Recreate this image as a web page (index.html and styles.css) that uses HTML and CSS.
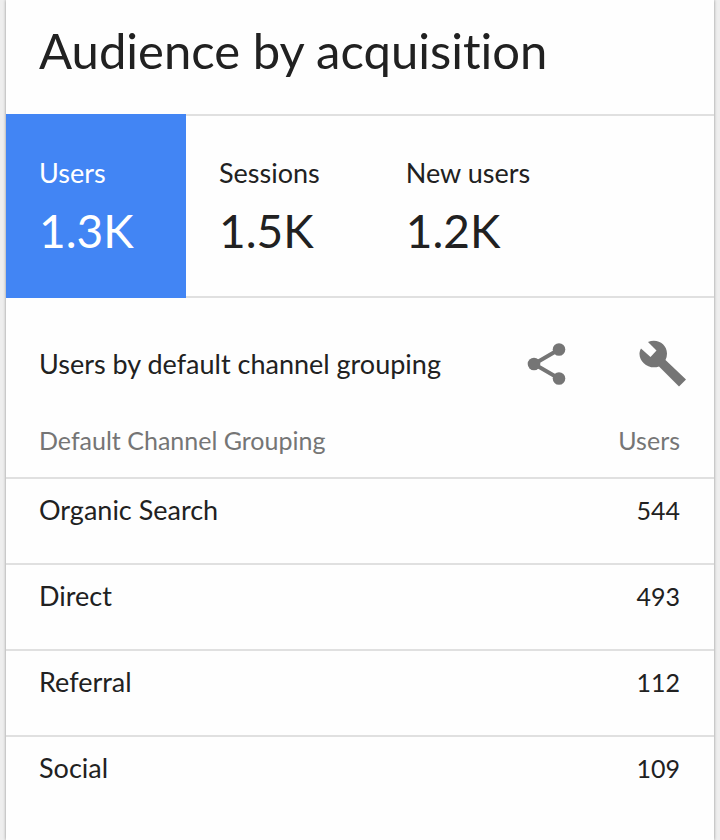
FILE: index.html
```html
<!DOCTYPE html>
<html lang="en">
<head>
    <meta charset="UTF-8">
    <meta name="viewport" content="width=device-width, initial-scale=1.0">
    <title>Audience by acquisition</title>
    <link rel="stylesheet" href="styles.css">
</head>
<body>
    <main class="card">
        <h1 class="card-title">Audience by acquisition</h1>

        <div class="metrics">
            <button class="metric active" type="button">
                <span class="metric-label">Users</span>
                <span class="metric-value">1.3K</span>
            </button>
            <button class="metric" type="button">
                <span class="metric-label">Sessions</span>
                <span class="metric-value">1.5K</span>
            </button>
            <button class="metric" type="button">
                <span class="metric-label">New users</span>
                <span class="metric-value">1.2K</span>
            </button>
        </div>

        <div class="report-header">
            <h2>Users by default channel grouping</h2>
            <div class="actions">
                <button class="icon-button" type="button" aria-label="Share">
                    <svg viewBox="0 0 48 48" width="48" height="48">
                        <path d="M36 9.5 11 24l25 14.5" fill="none" stroke="#757575" stroke-width="4"/>
                        <circle cx="36" cy="9.5" r="6.3" fill="#757575"/>
                        <circle cx="11" cy="24" r="6.3" fill="#757575"/>
                        <circle cx="36" cy="38.5" r="6.3" fill="#757575"/>
                    </svg>
                </button>
                <button class="icon-button" type="button" aria-label="Customize">
                    <svg viewBox="0 0 48 48" width="48" height="48">
                        <path fill="#757575" d="M9 2C18-2 28 4 28 13.500Q28 17 26.500 20L47 39.500 40 46.500 20 26.500C10 30 0 22 .500 13Q.800 10 2 8.500L11.500 17 17.500 10.500z"/>
                    </svg>
                </button>
            </div>
        </div>

        <table class="report">
            <thead>
                <tr>
                    <th scope="col">Default Channel Grouping</th>
                    <th scope="col">Users</th>
                </tr>
            </thead>
            <tbody>
                <tr>
                    <td>Organic Search</td>
                    <td>544</td>
                </tr>
                <tr>
                    <td>Direct</td>
                    <td>493</td>
                </tr>
                <tr>
                    <td>Referral</td>
                    <td>112</td>
                </tr>
                <tr>
                    <td>Social</td>
                    <td>109</td>
                </tr>
            </tbody>
        </table>
    </main>
</body>
</html>
```
FILE: styles.css
```css
* {
    box-sizing: border-box;
}
body {
    margin: 0;
    background: #eeeeee;
    color: #212121;
    font-family: Lato, sans-serif;
    font-size: 27px;
    line-height: 32px;
    font-variant-ligatures: none;
}
.card {
    min-height: 100vh;
    margin: 0 6px;
    background: #fefefe;
    box-shadow: 0 0 3px rgba(0, 0, 0, 0.4);
}
.card-title {
    margin: 0;
    padding: 18px 33px 32px;
    font-size: 49px;
    font-weight: 400;
    line-height: 64px;
}
.metrics {
    display: flex;
    border-top: 2px solid #e0e0e0;
    border-bottom: 2px solid #e0e0e0;
}
.metric {
    display: flex;
    flex-direction: column;
    min-width: 180px;
    margin: -2px 0;
    padding: 43px 53px 37px 33px;
    border: none;
    background: none;
    color: inherit;
    font: inherit;
    text-align: left;
    cursor: pointer;
}
.metric.active {
    background: #4285f4;
    color: #ffffff;
}
.metric-value {
    margin-top: 12px;
    font-size: 46px;
    line-height: 60px;
}
.metric.active .metric-value {
    margin-right: -10px;
}
.report-header {
    display: flex;
    align-items: center;
    justify-content: space-between;
    padding: 42px 27px 0 33px;
}
.report-header h2 {
    margin: 0;
    font-size: 27px;
    font-weight: 400;
}
.actions {
    display: flex;
    gap: 68px;
}
.icon-button {
    display: flex;
    align-items: center;
    padding: 0;
    border: none;
    background: none;
    cursor: pointer;
}
.report {
    width: 100%;
    border-collapse: collapse;
}
.report th,
.report td {
    padding: 15px 34px 37px 33px;
    border-top: 2px solid #e0e0e0;
    text-align: left;
}
.report th {
    padding-top: 36px;
    padding-bottom: 21px;
    border-top: none;
    color: #757575;
    font-size: 25px;
    font-weight: 400;
}
.report th:last-child,
.report td:last-child {
    font-size: 25px;
    text-align: right;
}
```
